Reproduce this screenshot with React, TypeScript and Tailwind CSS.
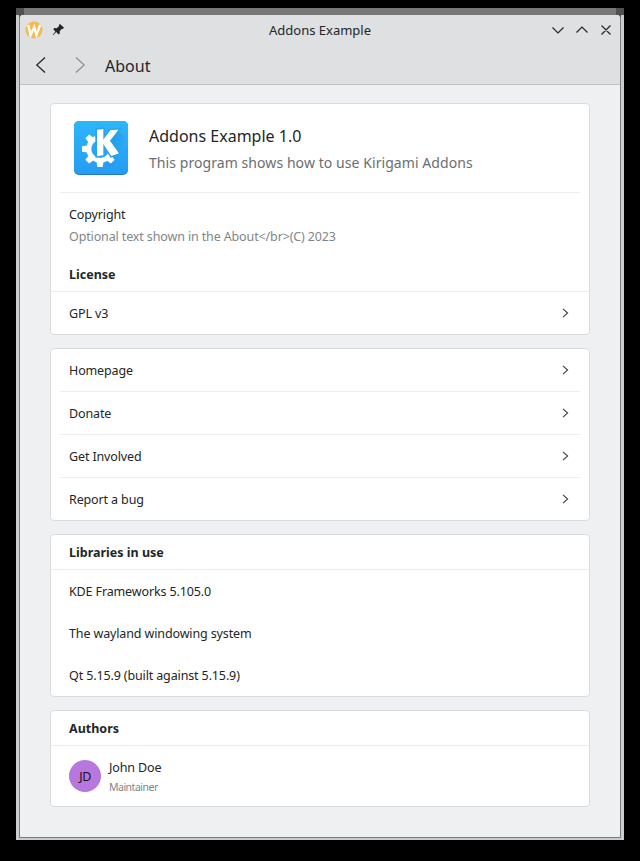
import React from "react";

const Chevron = () => (
  <svg width="8" height="10" viewBox="0 0 8 10" fill="none" stroke="#3c4043" strokeWidth="1.1" className="mr-[19px]">
    <path d="M1 .8 5.6 5 1 9.2" />
  </svg>
);

const Card = ({ className, children }: { className: string; children: React.ReactNode }) => (
  <section className={`rounded-[4px] border border-[#d9dbdd] bg-white ${className}`}>{children}</section>
);

const Row = ({ label }: { label: string }) => (
  <div className="flex h-[42px] items-center justify-between pl-[18px]">
    <span className="pt-[2px]">{label}</span>
    <Chevron />
  </div>
);

const Line = ({ inset = false }: { inset?: boolean }) => (
  <div className={`h-px bg-[#ebecee] ${inset ? "mx-[9px]" : ""}`} />
);

const KdeLogo = () => (
  <svg width="54" height="54" viewBox="0 0 162 162">
    <defs>
      <linearGradient id="blue" x1="0" y1="0" x2="0" y2="1">
        <stop offset="0" stopColor="#2db6fa" />
        <stop offset="1" stopColor="#259cf2" />
      </linearGradient>
      <linearGradient id="shade" x1="0" y1="0" x2="1" y2="1">
        <stop offset="0" stopColor="#1768b0" stopOpacity=".4" />
        <stop offset=".6" stopColor="#1768b0" stopOpacity="0" />
      </linearGradient>
    </defs>
    <rect width="162" height="162" rx="15" fill="#1e7fc4" />
    <rect width="162" height="159" rx="15" fill="url(#blue)" />
    <path d="M131 27 162 58V159H125L98 130 133 95 104 64Z" fill="url(#shade)" />
    <path d="M66 52A34 34 0 1 0 112 90" fill="none" stroke="#fff" strokeWidth="15" />
    <g fill="#fff">
      {[90, 135, 180, 225, 45].map((a) => (
        <path key={a} d="M34-11 54-8V8L34 11Z" transform={`translate(78 84) rotate(${a})`} />
      ))}
    </g>
    <g fill="#fff" stroke="#29a4f3" strokeWidth="10" paintOrder="stroke">
      <path d="M110 28 133 26 107 59 134 97 112 104 88 67V58Z" />
      <path d="M69 26 88 24V103L69 105Z" />
    </g>
    <path d="M110 28 133 26 107 59 134 97 112 104 86 67V58Z" fill="#fff" />
  </svg>
);

export default function App() {
  return (
    <div className="flex h-[861px] w-[640px] flex-col bg-black px-[16px] pt-[8px] font-['Noto_Sans',sans-serif] text-[12.5px] leading-[18px] tracking-[-0.13px] text-[#232629]">
      <div className="flex h-[7px] justify-between bg-[#777]">
        <div className="w-[8px] bg-[#505050]" />
        <div className="w-[8px] bg-[#505050]" />
      </div>
      <div className="h-[825px] bg-[#cbccce] px-[3px] pb-[2px]">
        <div className="bg-[#444]">
          <div className="flex h-[823px] flex-col rounded-t-[4px] border-x border-b border-[#797b7d] bg-[#eff0f1]">
            <header className="h-[70px] rounded-t-[3px] border-b border-[#bfc1c3] bg-[#dee0e2]">
              <div className="flex h-[30px] items-center">
                <svg width="50" height="30" viewBox="0 0 50 30" className="shrink-0">
                  <circle cx="14" cy="15" r="8.5" fill="#f8b84b" />
                  <path d="M8.2 10 10.6 20 14.2 12 16.4 20 20.2 10" fill="none" stroke="#fff" strokeWidth="2.4" />
                  <path d="M40 9 44 12.8 42.9 14 42 13.7 39.7 16.2 39.8 18.4 38.7 19.4 36.1 17.1 33.2 20.2 32.8 19.8 35.3 16.4 33.3 14.2 34.3 13.1 36.7 13.2 39.1 11.1 38.9 10.1Z" fill="#232629" />
                </svg>
                <h1 className="flex-1 text-center text-[13px] tracking-normal">Addons Example</h1>
                <svg width="70" height="30" viewBox="0 0 70 30" fill="none" stroke="#232629" strokeWidth="1.15" className="-ml-[20px] shrink-0">
                  <path d="M2.5 12.5 8 18 13.5 12.5M26.5 17.5 32 12 37.5 17.5M51.5 10.5 60.5 19.5M60.5 10.5 51.5 19.5" />
                </svg>
              </div>
              <div className="flex h-[40px] items-center">
                <svg width="85" height="40" viewBox="0 0 85 40" fill="none" strokeWidth="1.25">
                  <path d="M25 12.5 16.8 20 25 27.5" stroke="#232629" />
                  <path d="M56 12.5 64.2 20 56 27.5" stroke="#8d9093" />
                </svg>
                <h2 className="pt-[2px] text-[16px] leading-[24px] tracking-normal">About</h2>
              </div>
            </header>
            <main className="flex flex-col gap-[13px] px-[30px] pt-[18px]">
              <Card className="h-[232px]">
                <div className="flex h-[88px] pl-[23px] pt-[17px]">
                  <KdeLogo />
                  <div className="ml-[21px] pt-[3px]">
                    <div className="text-[16px] leading-[24px] tracking-normal">Addons Example 1.0</div>
                    <div className="mt-[4px] text-[14px] leading-[22px] tracking-[0.07px] text-[#6b6e71]">This program shows how to use Kirigami Addons</div>
                  </div>
                </div>
                <Line inset />
                <div className="h-[98px] pl-[18px] pt-[13px]">
                  <div>Copyright</div>
                  <div className="mt-[4px] text-[#7f8689]">{"Optional text shown in the About</br>(C) 2023"}</div>
                  <div className="mt-[20px] font-bold tracking-normal">License</div>
                </div>
                <Line />
                <Row label="GPL v3" />
              </Card>
              <Card className="h-[173px]">
                <Row label="Homepage" />
                <Line inset />
                <Row label="Donate" />
                <Line inset />
                <Row label="Get Involved" />
                <Line inset />
                <Row label="Report a bug" />
              </Card>
              <Card className="h-[163px]">
                <div className="flex h-[34px] items-center pl-[18px] pt-[2px] font-bold tracking-normal">Libraries in use</div>
                <Line />
                {["KDE Frameworks 5.105.0", "The wayland windowing system", "Qt 5.15.9 (built against 5.15.9)"].map((t) => (
                  <div key={t} className="flex h-[42px] items-center pl-[18px] pt-[2px]">{t}</div>
                ))}
              </Card>
              <Card className="h-[97px]">
                <div className="flex h-[34px] items-center pl-[18px] pt-[2px] font-bold tracking-normal">Authors</div>
                <Line />
                <div className="flex h-[60px] items-center pl-[18px]">
                  <div className="flex size-[32px] items-center justify-center rounded-full bg-[#b877dc] pt-[2px] text-[12.5px] tracking-[-0.5px] text-[#19121d]">JD</div>
                  <div className="ml-[8px] pt-[2px]">
                    <div>John Doe</div>
                    <div className="mt-[2px] text-[10.5px] leading-[16px] tracking-[-0.5px] text-[#7f8689]">Maintainer</div>
                  </div>
                </div>
              </Card>
            </main>
          </div>
        </div>
      </div>
    </div>
  );
}
